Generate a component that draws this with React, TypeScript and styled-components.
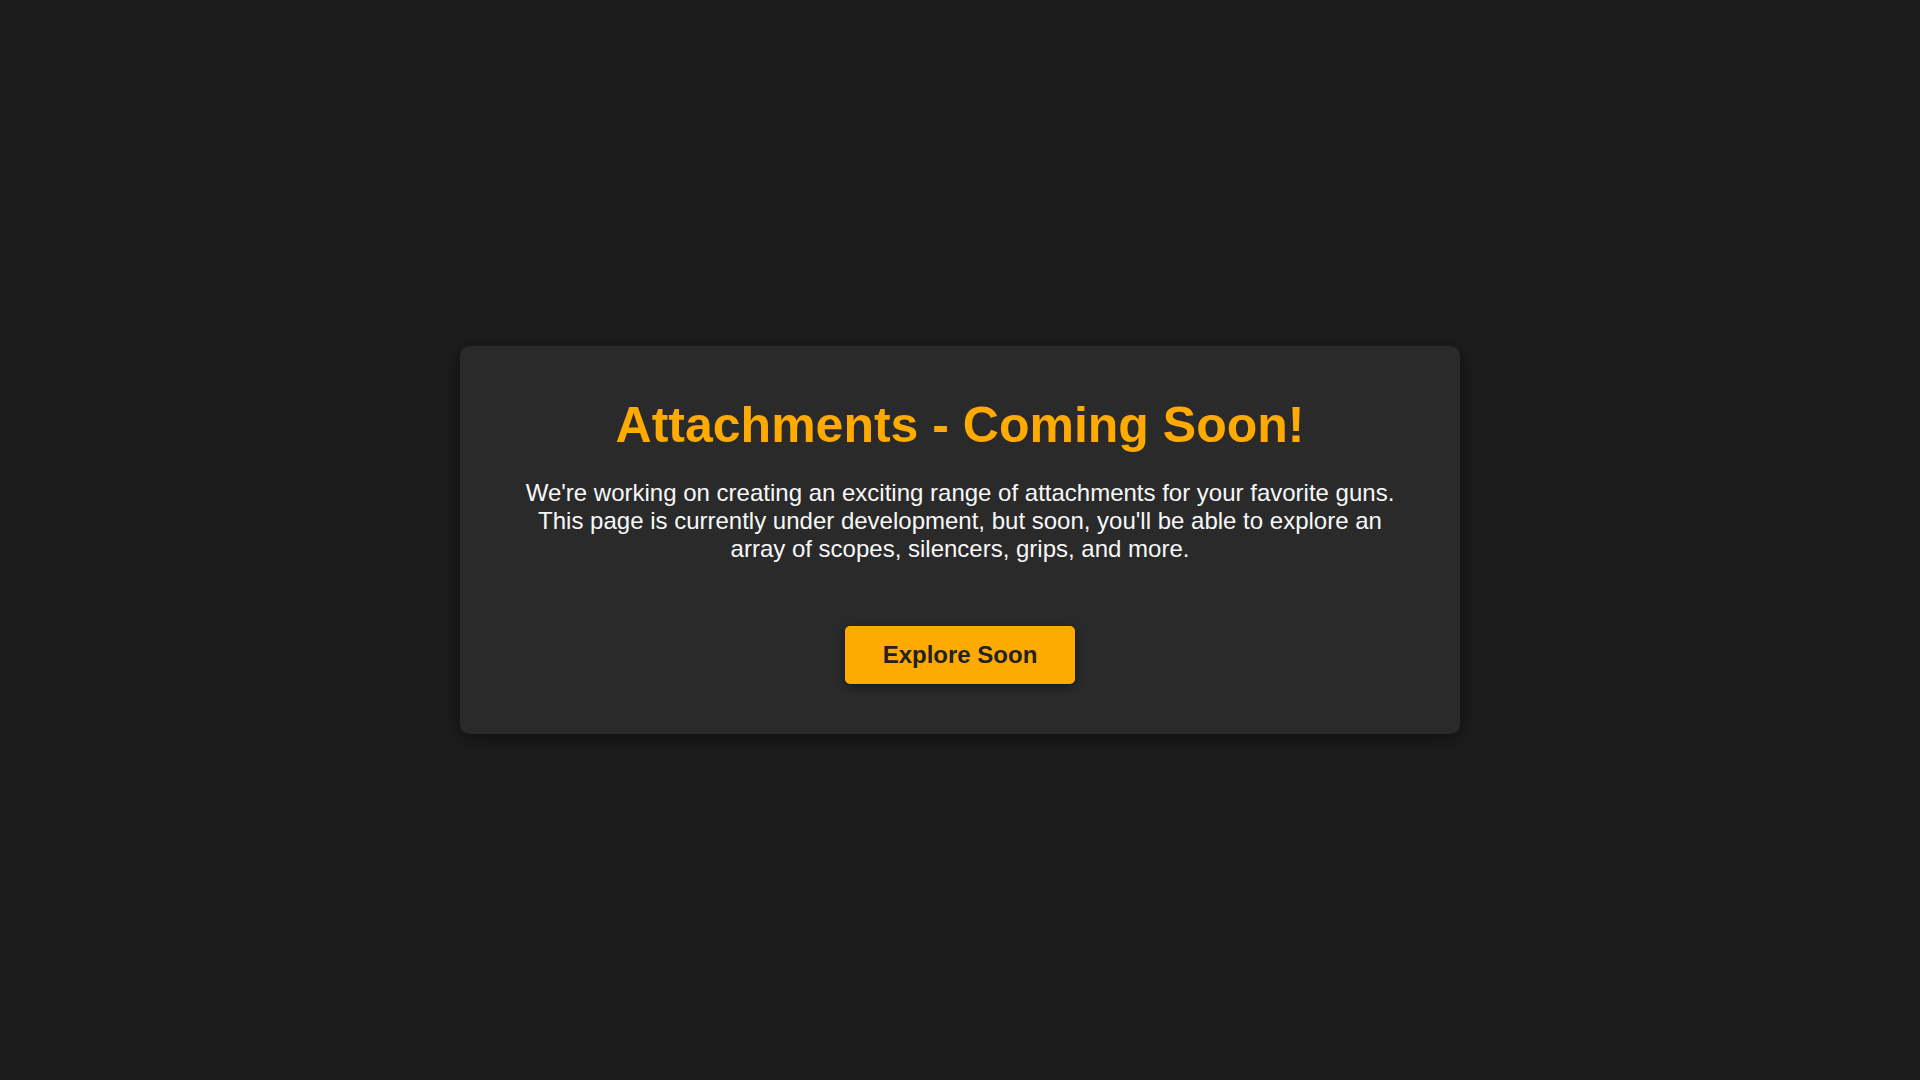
import React from "react";
import styled, { createGlobalStyle } from "styled-components";

const GlobalStyle = createGlobalStyle`
  html, body {
    margin: 0;
    padding: 0;
    background: #1c1c1c;
  }
  body {
    font-family: "Liberation Sans", Arial, sans-serif;
  }
`;

const Page = styled.main`
  min-height: 100vh;
  display: flex;
  align-items: center;
  justify-content: center;
  background: #1c1c1c;
`;

const Card = styled.section`
  width: 1000px;
  box-sizing: border-box;
  padding: 50px 60px;
  background: #2a2a2a;
  border-radius: 10px;
  box-shadow: 0 4px 20px rgba(0, 0, 0, 0.45);
  display: flex;
  flex-direction: column;
  align-items: center;
  text-align: center;
`;

const Title = styled.h1`
  margin: 0 0 25px;
  font-size: 50px;
  font-weight: 700;
  line-height: normal;
  color: #ffaa00;
`;

const Text = styled.p`
  margin: 0 0 63px;
  font-size: 24px;
  line-height: normal;
  color: #f8f8f8;
`;

const Button = styled.button`
  font-family: "Liberation Sans", Arial, sans-serif;
  font-size: 24px;
  font-weight: 700;
  line-height: normal;
  color: #222222;
  background: #ffaa00;
  border: none;
  border-radius: 5px;
  padding: 15px 38px;
  cursor: pointer;
  box-shadow: 0 4px 10px rgba(0, 0, 0, 0.35);
`;

export default function App() {
  return (
    <>
      <GlobalStyle />
      <Page>
        <Card>
          <Title>Attachments - Coming Soon!</Title>
          <Text>
            We're working on creating an exciting range of attachments for your favorite guns.
            This page is currently under development, but soon, you'll be able to explore an
            array of scopes, silencers, grips, and more.
          </Text>
          <Button>Explore Soon</Button>
        </Card>
      </Page>
    </>
  );
}
